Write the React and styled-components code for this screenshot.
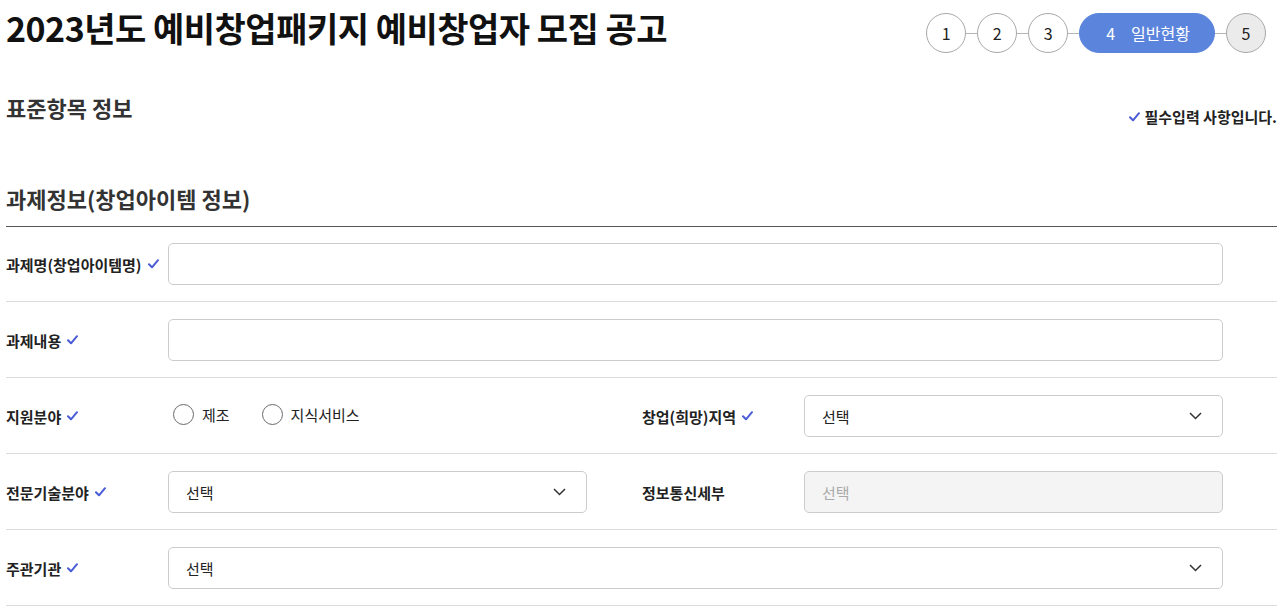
import styled, { createGlobalStyle } from "styled-components";

const GlobalStyle = createGlobalStyle`
  html, body {
    margin: 0;
    padding: 0;
    background: #ffffff;
  }
  body {
    font-family: "Noto Sans CJK KR", "Noto Sans", sans-serif;
    color: #222222;
  }
`;

const Page = styled.div`
  width: 1280px;
  box-sizing: border-box;
  padding: 0 3px 0 6px;
`;

const Header = styled.div`
  display: flex;
  flex-direction: row;
  justify-content: space-between;
  align-items: flex-start;
  height: 53px;
`;

const Title = styled.h1`
  margin: 7px 0 0;
  font-size: 34px;
  line-height: 42px;
  font-weight: 700;
  letter-spacing: -0.5px;
  color: #111111;
`;

const Steps = styled.ol`
  list-style: none;
  margin: 13px 11px 0 0;
  padding: 0;
  display: flex;
  flex-direction: row;
  align-items: center;
`;

const Connector = styled.li`
  width: 11px;
  height: 1px;
  background: #b5b5b5;
`;

const Step = styled.li`
  box-sizing: border-box;
  height: 40px;
  min-width: 40px;
  padding: ${(p) => (p.$active ? "0 24px 0 26px" : "0")};
  border-radius: 20px;
  border: 1px solid ${(p) => (p.$active ? "#5b84dc" : "#a8a8a8")};
  background: ${(p) => (p.$active ? "#5b84dc" : p.$next ? "#ebebeb" : "#ffffff")};
  color: ${(p) => (p.$active ? "#ffffff" : "#222222")};
  display: flex;
  align-items: center;
  justify-content: center;
  gap: 16px;
  font-size: 16px;
`;

const SubRow = styled.div`
  display: flex;
  flex-direction: row;
  justify-content: space-between;
  align-items: flex-start;
  margin-top: 39px;
`;

const SubTitle = styled.h2`
  margin: 0;
  font-size: 22px;
  line-height: 30px;
  font-weight: 700;
  color: #333333;
`;

const Note = styled.p`
  margin: 0;
  padding-top: 15px;
  font-size: 15px;
  line-height: 20px;
  font-weight: 600;
  color: #222222;
  display: flex;
  align-items: center;
  gap: 5px;
`;

const SectionTitle = styled.h3`
  margin: 56px 0 0;
  padding-bottom: 13px;
  font-size: 22px;
  line-height: 30px;
  font-weight: 700;
  color: #333333;
  border-bottom: 1px solid #555555;
`;

const Fields = styled.div`
  display: flex;
  flex-direction: column;
`;

const Row = styled.div`
  display: grid;
  grid-template-columns: ${(p) => (p.$split ? "162px 419px 55px 162px 1fr" : "162px 1fr")};
  align-items: center;
  padding: 17px 54px 16px 0;
  border-bottom: 1px solid #dddddd;
  &:first-child {
    padding-top: 16px;
  }
`;

const Label = styled.div`
  font-size: 15px;
  font-weight: 600;
  color: #222222;
  display: flex;
  align-items: center;
  gap: 6px;
  grid-column: ${(p) => (p.$second ? "4" : "auto")};
`;

const TextInput = styled.div`
  box-sizing: border-box;
  height: 42px;
  border: 1px solid #cccccc;
  border-radius: 5px;
  background: #ffffff;
`;

const Select = styled.div`
  box-sizing: border-box;
  height: 42px;
  border: 1px solid #cccccc;
  border-radius: 5px;
  background: ${(p) => (p.$disabled ? "#f4f4f4" : "#ffffff")};
  color: ${(p) => (p.$disabled ? "#aaaaaa" : "#222222")};
  display: flex;
  align-items: center;
  justify-content: space-between;
  padding: 0 20px 0 17px;
  font-size: 15px;
  grid-column: ${(p) => (p.$second ? "5" : "auto")};
`;

const Radios = styled.div`
  display: flex;
  flex-direction: row;
  align-items: center;
  gap: 32px;
  padding-left: 5px;
  height: 42px;
`;

const RadioItem = styled.label`
  display: flex;
  align-items: center;
  gap: 8px;
  font-size: 15px;
  color: #222222;
  position: relative;
  top: -2px;
`;

const RadioCircle = styled.span`
  box-sizing: border-box;
  width: 21px;
  height: 21px;
  border-radius: 50%;
  border: 1px solid #6a6a6a;
  background: #ffffff;
`;

const Check = () => (
  <svg width="11" height="10" viewBox="0 0 11 10" aria-hidden="true">
    <path d="M1 5.2 L4 8.3 L10 1.2" fill="none" stroke="#4a5bd6" strokeWidth="2" strokeLinecap="round" strokeLinejoin="round" />
  </svg>
);

const Chevron = () => (
  <svg width="13" height="8" viewBox="0 0 13 8" aria-hidden="true">
    <path d="M1 1 L6.5 6.5 L12 1" fill="none" stroke="#333333" strokeWidth="1.5" />
  </svg>
);

const Required = ({ children }) => (
  <Label>
    {children}
    <Check />
  </Label>
);

export default function App() {
  return (
    <Page>
      <GlobalStyle />
      <Header>
        <Title>2023년도 예비창업패키지 예비창업자 모집 공고</Title>
        <Steps>
          <Step>1</Step>
          <Connector />
          <Step>2</Step>
          <Connector />
          <Step>3</Step>
          <Connector />
          <Step $active>
            <span>4</span>
            <span>일반현황</span>
          </Step>
          <Connector />
          <Step $next>5</Step>
        </Steps>
      </Header>

      <SubRow>
        <SubTitle>표준항목 정보</SubTitle>
        <Note>
          <Check />
          필수입력 사항입니다.
        </Note>
      </SubRow>

      <SectionTitle>과제정보(창업아이템 정보)</SectionTitle>

      <Fields>
        <Row>
          <Required>과제명(창업아이템명)</Required>
          <TextInput />
        </Row>
        <Row>
          <Required>과제내용</Required>
          <TextInput />
        </Row>
        <Row $split>
          <Required>지원분야</Required>
          <Radios>
            <RadioItem>
              <RadioCircle />
              제조
            </RadioItem>
            <RadioItem>
              <RadioCircle />
              지식서비스
            </RadioItem>
          </Radios>
          <Label $second>
            창업(희망)지역
            <Check />
          </Label>
          <Select $second>
            선택
            <Chevron />
          </Select>
        </Row>
        <Row $split>
          <Required>전문기술분야</Required>
          <Select>
            선택
            <Chevron />
          </Select>
          <Label $second>정보통신세부</Label>
          <Select $second $disabled>
            선택
          </Select>
        </Row>
        <Row>
          <Required>주관기관</Required>
          <Select>
            선택
            <Chevron />
          </Select>
        </Row>
      </Fields>
    </Page>
  );
}
